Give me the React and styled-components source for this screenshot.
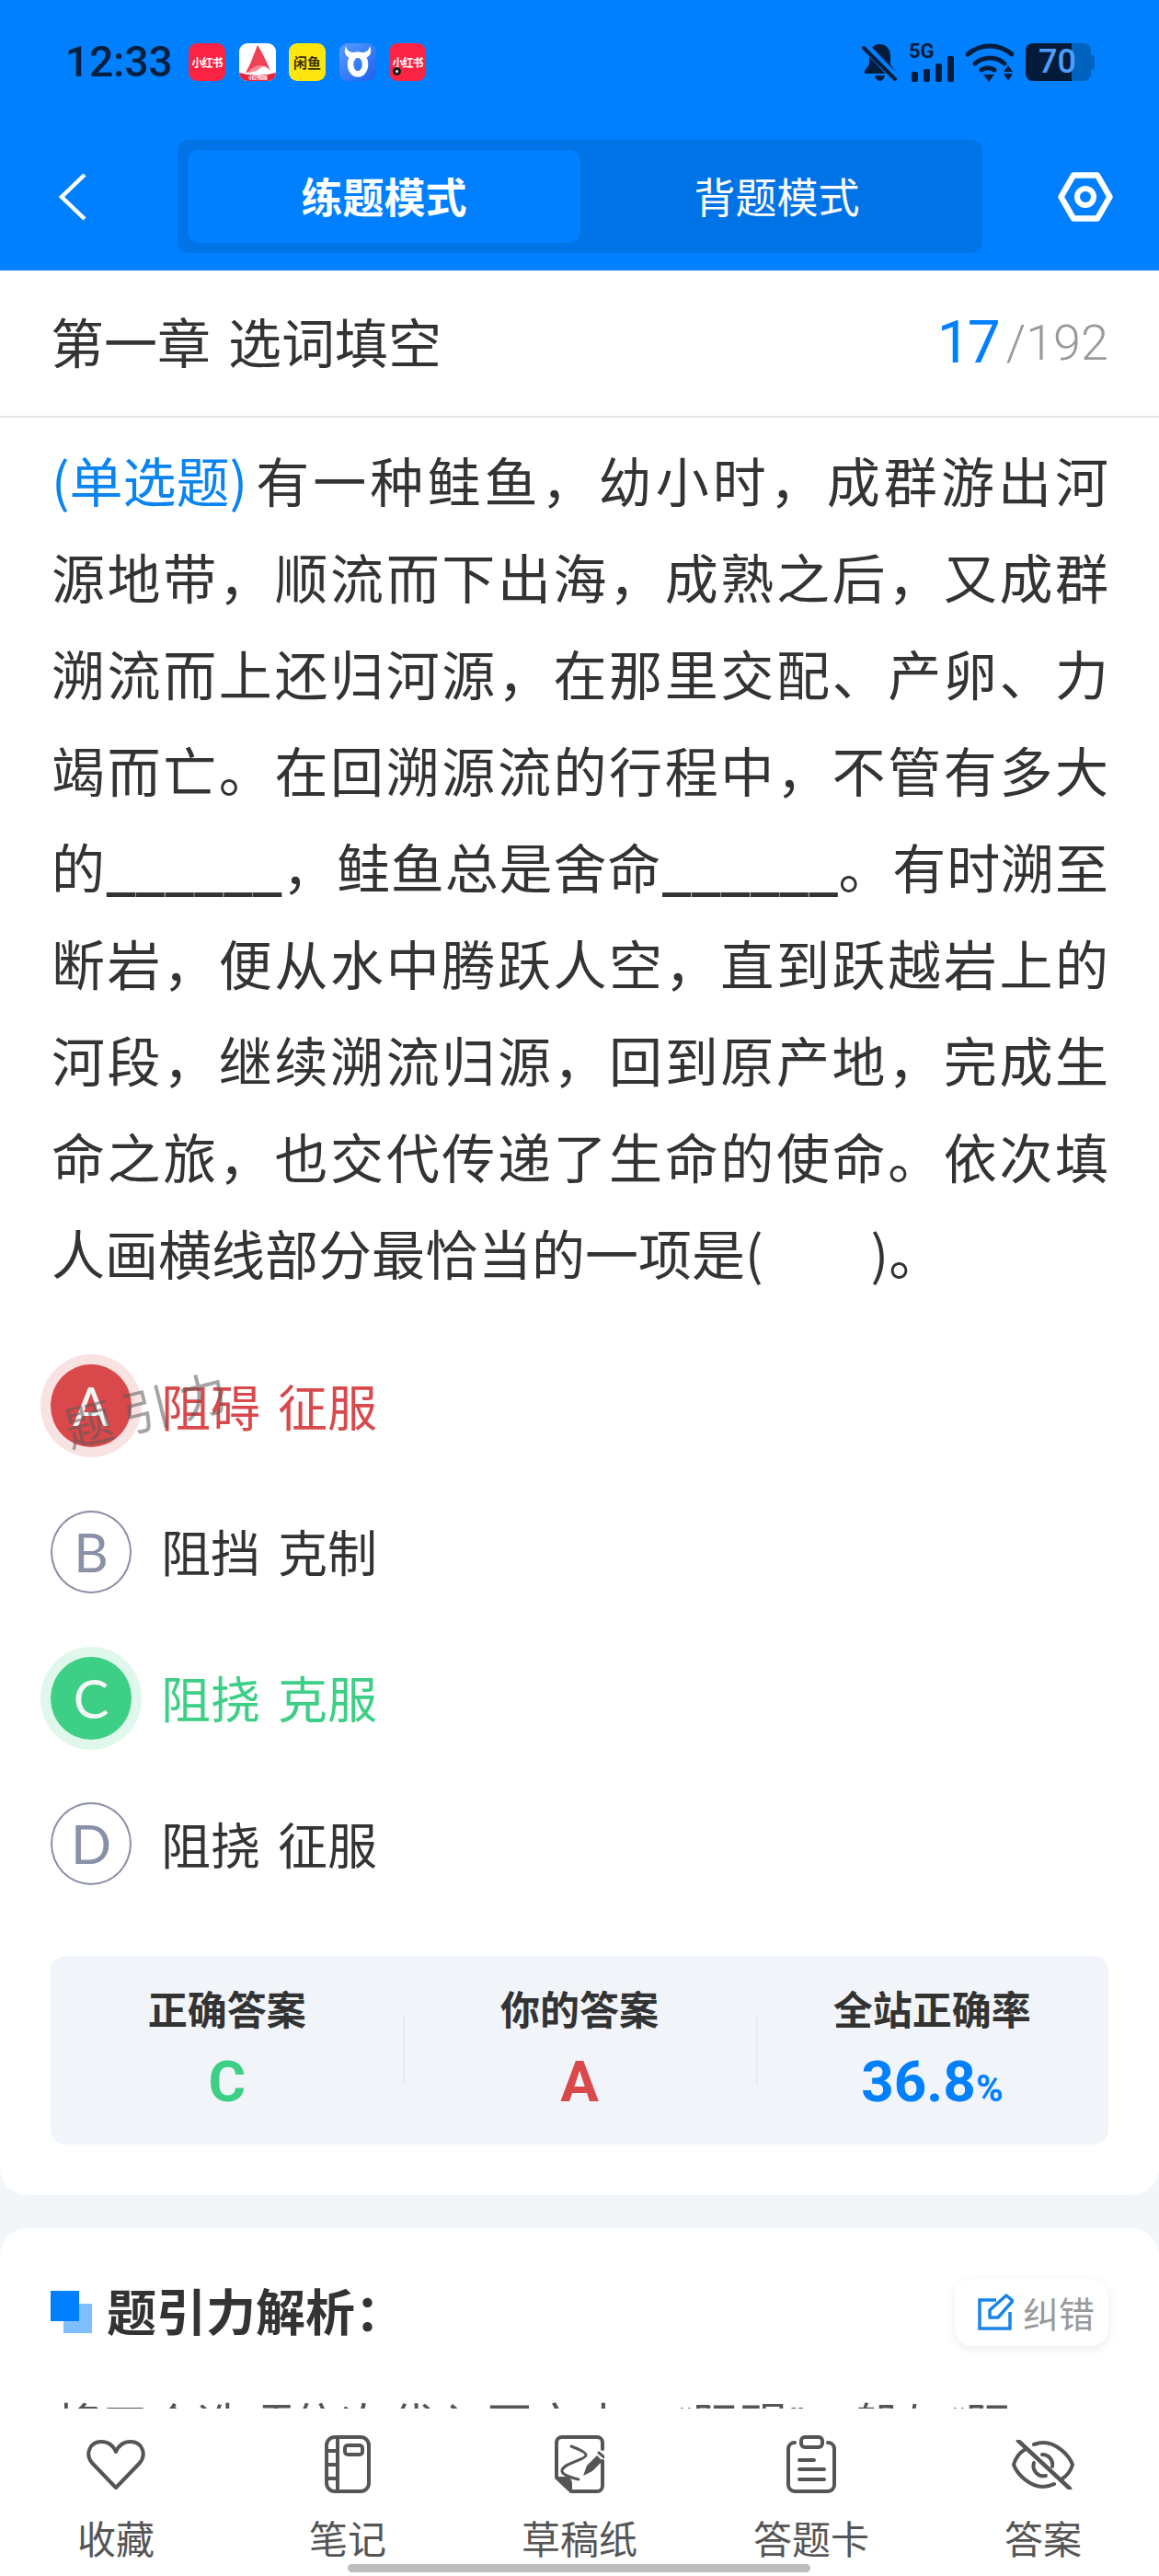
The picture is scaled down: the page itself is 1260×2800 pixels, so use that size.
import styled, { createGlobalStyle } from 'styled-components';

const CJK = '"Noto Sans CJK SC", "Noto Sans", sans-serif';
const LATIN = 'Roboto, "Noto Sans CJK SC", sans-serif';

const GlobalStyle = createGlobalStyle`
  html, body { margin: 0; padding: 0; background: #f2f6f9; }
  * { box-sizing: border-box; }
  body { font-family: ${CJK}; color: #333; }
`;

const Page = styled.div`
  position: relative;
  width: 1260px;
  height: 2800px;
  overflow: hidden;
  background: #f2f6f9;
`;

/* top blue area */
const Header = styled.header`
  height: 294px;
  padding-top: 47px;
  background: #0080ff;
`;
const StatusBar = styled.div`
  display: flex;
  align-items: center;
  height: 41px;
  padding: 0 70px 0 71px;
`;
const Clock = styled.span`
  width: 134px;
  font: 500 46px/41px ${LATIN};
  color: #061f3f;
`;
const AppIcons = styled.div`
  display: flex;
  gap: 14.5px;
`;
const AppIcon = styled.div`
  position: relative;
  display: flex;
  align-items: center;
  justify-content: center;
  width: 40px;
  height: 41px;
  border-radius: 9px;
  overflow: hidden;
  background: ${(p) => p.$bg};
  color: ${(p) => p.$fg || '#fff'};
  font: 700 ${(p) => p.$size || 12}px/1 ${CJK};
  letter-spacing: ${(p) => (p.$size ? 0 : '-1px')};
  white-space: nowrap;
`;
const RecordDot = styled.span`
  position: absolute;
  left: 4px;
  bottom: 6px;
  width: 9px;
  height: 9px;
  border-radius: 50%;
  border: 3px solid #1a1a1a;
  background: #fff;
`;
const StatusRight = styled.div`
  display: flex;
  align-items: center;
  gap: 12px;
  margin-left: auto;
  color: #041d3c;
`;
const Battery = styled.div`
  position: relative;
  display: flex;
  width: 71px;
  height: 41px;
  margin-left: 1px;
  border-radius: 8px;
  overflow: hidden;
  background: #0063bf;
`;
const BatteryFill = styled.div`
  height: 100%;
  background: #031b38;
`;
const BatteryLabel = styled.span`
  position: absolute;
  left: 14px;
  top: 0;
  font: 500 36px/41px ${LATIN};
  color: #4d9fff;
`;
const BatteryTip = styled.div`
  width: 4px;
  height: 16px;
  margin-left: -12px;
  border-radius: 0 3px 3px 0;
  background: #0063bf;
`;

const NavRow = styled.div`
  display: flex;
  align-items: center;
  height: 123px;
  margin-top: 64px;
`;
const BackButton = styled.div`
  display: flex;
  width: 193px;
  padding-left: 64px;
`;
const ModeTabs = styled.div`
  display: flex;
  width: 875px;
  height: 123px;
  padding: 11px 10px 11px 11px;
  border-radius: 12px;
  background: #0073e6;
`;
const ModeTab = styled.div`
  flex: 1;
  display: flex;
  align-items: center;
  justify-content: center;
  padding-bottom: 2px;
  border-radius: 12px;
  color: #fff;
  font-size: 45px;
  font-weight: ${(p) => (p.$active ? 700 : 400)};
  background: ${(p) => (p.$active ? '#0080ff' : 'transparent')};
`;
const SettingsButton = styled.div`
  display: flex;
  padding-left: 82px;
`;

/* question card */
const Card = styled.section`
  background: #fff;
  border-radius: 0 0 30px 30px;
  padding-bottom: 55px;
`;
const ChapterBar = styled.div`
  display: flex;
  align-items: center;
  justify-content: space-between;
  height: 160px;
  padding: 0 55px 6px 55px;
  border-bottom: 2px solid #e4e4e4;
`;
const ChapterTitle = styled.h1`
  margin: 0;
  font-size: 58px;
  font-weight: 400;
  word-spacing: 6px;
  color: #333;
`;
const Progress = styled.div`
  display: flex;
  align-items: center;
  margin-top: 5px;
  font-family: ${LATIN};
  font-weight: 300;
  line-height: 1;
  color: #999;
  font-size: 54px;
`;
const ProgressCurrent = styled.span`
  font-size: 64px;
  font-weight: 400;
  letter-spacing: -3px;
  color: #0080ff;
  margin-right: 9px;
`;
const Question = styled.div`
  padding: 15px 55px 0 56px;
`;
const QuestionLine = styled.p`
  margin: 0;
  height: 105px;
  font-size: 58px;
  line-height: 105px;
  color: #333;
  text-align: ${(p) => (p.$last ? 'left' : 'justify')};
  text-align-last: ${(p) => (p.$last ? 'left' : 'justify')};
`;
const QuestionType = styled.span`
  display: inline-block;
  margin-right: 5px;
  color: #0a84f0;
`;
const Blank = styled.span`
  display: inline-block;
  letter-spacing: -1px;
  font-weight: 700;
  text-align-last: left;
`;

const Options = styled.div`
  position: relative;
  margin-top: 35px;
  padding-left: 55px;
`;
const OptionRow = styled.div`
  display: flex;
  align-items: center;
  height: 158.67px;
`;
const toneColor = { wrong: '#d9484b', right: '#3ccf85' };
const toneHalo = { wrong: '#f9e2e2', right: '#e0f7eb' };
const OptionBadge = styled.div`
  display: flex;
  align-items: center;
  justify-content: center;
  width: 88px;
  height: 90px;
  border-radius: 50%;
  font: 400 58px/1 Lato, sans-serif;
  color: ${(p) => (p.$tone ? '#f4f7f6' : '#8a90a8')};
  background: ${(p) => (p.$tone ? toneColor[p.$tone] : '#fff')};
  border: ${(p) => (p.$tone ? 'none' : '2.5px solid #8a8fa6')};
  box-shadow: ${(p) => (p.$tone ? `0 0 0 11px ${toneHalo[p.$tone]}` : 'none')};
`;
const OptionText = styled.span`
  margin-left: 32px;
  padding-bottom: 2px;
  font-size: 54px;
  word-spacing: 7px;
  color: ${(p) => (p.$tone ? toneColor[p.$tone] : '#333')};
`;
const Watermark = styled.div`
  position: absolute;
  left: 68px;
  top: 50px;
  font-size: 52px;
  letter-spacing: 12px;
  line-height: 60px;
  color: rgba(90, 90, 90, 0.55);
  transform: rotate(-14deg);
  white-space: nowrap;
`;

const StatsPanel = styled.div`
  display: grid;
  grid-template-columns: repeat(3, 1fr);
  height: 205px;
  margin: 42px 55px 0;
  border-radius: 16px;
  background: #f1f5f9;
`;
const StatCell = styled.div`
  position: relative;
  display: flex;
  flex-direction: column;
  align-items: center;
  padding-top: 30px;
  & + &::before {
    content: '';
    position: absolute;
    left: 0;
    top: 65px;
    height: 73px;
    width: 2px;
    background: #e7ebef;
  }
`;
const StatLabel = styled.div`
  font-size: 43px;
  line-height: 52px;
  font-weight: 700;
  color: #333;
`;
const StatValue = styled.div`
  margin-top: 22px;
  font: 700 62px/66px ${LATIN};
  color: ${(p) => p.$color};
`;
const StatUnit = styled.span`
  font-size: 40px;
`;

/* analysis card */
const AnalysisCard = styled.section`
  margin-top: 36px;
  height: 700px;
  padding: 55px 55px 0;
  border-radius: 30px 30px 0 0;
  background: #fff;
`;
const AnalysisHead = styled.div`
  display: flex;
  align-items: center;
  height: 73px;
`;
const HeadMark = styled.svg`
  flex: none;
  width: 45px;
  height: 46px;
  margin-right: 16px;
`;
const AnalysisTitle = styled.h2`
  margin: 0;
  padding-bottom: 5px;
  font-size: 54px;
  font-weight: 700;
  color: #333;
`;
const ReportButton = styled.div`
  display: flex;
  align-items: center;
  gap: 10px;
  margin-left: auto;
  height: 73px;
  padding: 0 15px 0 25px;
  border-radius: 18px;
  background: #fff;
  box-shadow: 0 3px 12px rgba(0, 0, 0, 0.08);
  font-size: 39px;
  color: #999;
`;
const AnalysisText = styled.p`
  margin: 36px 0 0 3px;
  font-family: ${LATIN};
  font-size: 52px;
  line-height: 105px;
  color: #555;
  white-space: nowrap;
`;

/* bottom bar */
const TabBar = styled.nav`
  position: absolute;
  left: 0;
  right: 0;
  bottom: 0;
  display: grid;
  grid-template-columns: repeat(5, 1fr);
  height: 182px;
  padding-top: 29px;
  background: #fff;
`;
const TabItem = styled.div`
  display: flex;
  flex-direction: column;
  align-items: center;
`;
const TabIcon = styled.div`
  display: flex;
  align-items: center;
  justify-content: center;
  height: 63px;
  color: #555;
`;
const TabLabel = styled.span`
  margin-top: 27px;
  font-size: 42px;
  line-height: 42px;
  color: #555;
`;
const HomeIndicator = styled.div`
  position: absolute;
  left: 378px;
  bottom: 4px;
  width: 503px;
  height: 9px;
  border-radius: 5px;
  background: #bdbdbd;
`;

const line = { fill: 'none', stroke: 'currentColor', strokeLinecap: 'round', strokeLinejoin: 'round' };

const options = [
  { key: 'A', text: '阻碍 征服', tone: 'wrong' },
  { key: 'B', text: '阻挡 克制' },
  { key: 'C', text: '阻挠 克服', tone: 'right' },
  { key: 'D', text: '阻挠 征服' },
];

const tabs = [
  {
    label: '收藏',
    icon: (
      <svg width="64" height="56" viewBox="0 0 64 56">
        <path {...line} strokeWidth="4" d="M32 53 L6 26 C-2 16 4 3 16 3 C23 3 29 7 32 14 C35 7 41 3 48 3 C60 3 66 16 58 26 Z" />
      </svg>
    ),
  },
  {
    label: '笔记',
    icon: (
      <svg width="50" height="63" viewBox="0 0 50 63">
        <rect {...line} strokeWidth="4" x="2" y="2" width="46" height="59" rx="9" />
        <path {...line} strokeWidth="4" d="M14 2 V61 M2 17 H14 M2 32 H14 M2 47 H14" />
        <rect {...line} strokeWidth="4" x="22" y="11" width="19" height="10" rx="3" />
      </svg>
    ),
  },
  {
    label: '草稿纸',
    icon: (
      <svg width="54" height="63" viewBox="0 0 54 63">
        <path {...line} strokeWidth="4" d="M52 15 V8 a6 6 0 0 0 -6 -6 H8 a6 6 0 0 0 -6 6 V46 L18 61 H46 a6 6 0 0 0 6 -6 V28" />
        <path fill="currentColor" d="M2 45 H12 a7 7 0 0 1 7 7 V61 H17 Z" />
        <path {...line} strokeWidth="3" d="M18 12 C26 15 35 19 34 22 C33 27 10 30 8 38 C7 43 18 46 26 48" />
        <path fill="currentColor" d="M31 44 L35 33 L46 22 L52 28 L41 39 Z" />
        <path {...line} strokeWidth="3" d="M48 19 L54 24" />
      </svg>
    ),
  },
  {
    label: '答题卡',
    icon: (
      <svg width="54" height="63" viewBox="0 0 54 63">
        <path {...line} strokeWidth="4" d="M9 8 a7 7 0 0 0 -7 6 V54 a7 7 0 0 0 7 7 H45 a7 7 0 0 0 7 -7 V14 a7 7 0 0 0 -7 -6" />
        <rect {...line} strokeWidth="4" x="16" y="2" width="23" height="11" rx="4" />
        <path {...line} strokeWidth="4" d="M14 27 H30 M14 37 H41 M14 48 H41" />
      </svg>
    ),
  },
  {
    label: '答案',
    icon: (
      <svg width="68" height="54" viewBox="0 0 68 54">
        <path {...line} strokeWidth="4" d="M15 10 C8 14 4 20 2 27 C6 38 20 51 34 51 C38 51 42 50 46 48" />
        <path {...line} strokeWidth="4" d="M24 5 C27 4 31 3 34 3 C48 3 62 16 66 27 C64 34 60 39 54 43" />
        <path {...line} strokeWidth="4.5" d="M7 1 L63 53" />
        <path {...line} strokeWidth="4" d="M24 25 a11 11 0 0 0 13 14" />
        <path {...line} strokeWidth="4" d="M33 16 a11 11 0 0 1 11 13" />
      </svg>
    ),
  },
];

export default function App() {
  return (
    <Page lang="zh-CN">
      <GlobalStyle />
      <Header>
        <StatusBar>
          <Clock>12:33</Clock>
          <AppIcons>
            <AppIcon $bg="#fb2343">小红书</AppIcon>
            <AppIcon $bg="#fff">
              <svg width="40" height="41" viewBox="0 0 40 41">
                <path fill="#ef4257" d="M20 2 C24 8 30 20 34 30 C30 25 26 24 23 26 C18 29 12 31 7 32 C12 24 16 12 20 2 Z" />
                <path fill="#f98a96" d="M9 32 C14 26 22 22 26 25 C20 30 14 32 9 32 Z" />
                <path fill="#e8213c" d="M0 32 Q20 38 40 32 V41 H0 Z" />
                <text x="20" y="39" fontSize="5" fill="#fff" textAnchor="middle" fontFamily={CJK}>小红书家居</text>
              </svg>
            </AppIcon>
            <AppIcon $bg="#ffe60f" $fg="#3a3100" $size={15}>闲鱼</AppIcon>
            <AppIcon $bg="linear-gradient(135deg, #5a9cff, #1a60ee)">
              <svg width="40" height="41" viewBox="0 0 40 41">
                <ellipse cx="20" cy="23" rx="8" ry="10.5" fill="none" stroke="#fff" strokeWidth="6.5" />
                <path fill="#fff" d="M7 3 C8 8 11 10 15 10 L25 10 C29 10 32 8 33 3 C36 10 33 15 28 16 L12 16 C7 15 4 10 7 3 Z" />
              </svg>
            </AppIcon>
            <AppIcon $bg="#fb2343">
              小红书
              <RecordDot />
            </AppIcon>
          </AppIcons>
          <StatusRight>
            <svg width="39" height="41" viewBox="0 0 39 41">
              <path fill="currentColor" d="M19.5 1 C12 1 8 7 8 14 V23 L3 30 V33 H36 V30 L31 23 V14 C31 7 27 1 19.5 1 Z" />
              <path fill="currentColor" d="M14 35 H25 C24 39 22 41 19.5 41 C17 41 15 39 14 35 Z" />
              <path stroke="#0080ff" strokeWidth="9" d="M4 4 L37 38" />
              <path stroke="currentColor" strokeWidth="4" strokeLinecap="round" d="M2 5 L36 39" />
            </svg>
            <svg width="50" height="42" viewBox="0 0 50 42">
              <text x="0" y="16" fontSize="22" fontWeight="700" fill="currentColor" fontFamily={LATIN}>5G</text>
              <rect x="3" y="31" width="7" height="11" rx="2" fill="currentColor" />
              <rect x="16" y="28" width="7" height="14" rx="2" fill="currentColor" />
              <rect x="29" y="22" width="7" height="20" rx="2" fill="currentColor" />
              <rect x="42" y="14" width="7" height="28" rx="2" fill="currentColor" />
            </svg>
            <svg width="52" height="42" viewBox="0 0 52 42">
              <path fill="none" stroke="currentColor" strokeWidth="5" strokeLinecap="round" d="M2 12 C16 0 36 0 50 12" />
              <path fill="none" stroke="currentColor" strokeWidth="5" strokeLinecap="round" d="M10 22 C19 14 33 14 42 22" />
              <path fill="none" stroke="currentColor" strokeWidth="5" strokeLinecap="round" d="M17 29 C21 26 27 26 31 29" />
              <path fill="currentColor" d="M19 34 H31 L25 42 Z" />
              <path fill="currentColor" d="M46 24 L51 31 H41 Z M41 33 H51 L46 41 Z" />
            </svg>
            <Battery>
              <BatteryFill style={{ width: '70%' }} />
              <BatteryLabel>70</BatteryLabel>
            </Battery>
            <BatteryTip />
          </StatusRight>
        </StatusBar>
        <NavRow>
          <BackButton>
            <svg width="30" height="52" viewBox="0 0 30 52">
              <path fill="none" stroke="#fff" strokeWidth="4.5" d="M28 2 L3 26 L28 50" />
            </svg>
          </BackButton>
          <ModeTabs>
            <ModeTab $active>练题模式</ModeTab>
            <ModeTab>背题模式</ModeTab>
          </ModeTabs>
          <SettingsButton>
            <svg width="60" height="54" viewBox="0 0 60 54">
              <path fill="none" stroke="#fff" strokeWidth="6.5" strokeLinejoin="round" d="M17 3.5 H43 L56.5 27 L43 50.5 H17 L3.5 27 Z" />
              <circle cx="30" cy="27" r="9" fill="none" stroke="#fff" strokeWidth="6" />
            </svg>
          </SettingsButton>
        </NavRow>
      </Header>

      <Card>
        <ChapterBar>
          <ChapterTitle>第一章 选词填空</ChapterTitle>
          <Progress>
            <ProgressCurrent>17</ProgressCurrent>/192
          </Progress>
        </ChapterBar>
        <Question>
          <QuestionLine><QuestionType>(单选题)</QuestionType>有一种鲑鱼，幼小时，成群游出河</QuestionLine>
          <QuestionLine>源地带，顺流而下出海，成熟之后，又成群</QuestionLine>
          <QuestionLine>溯流而上还归河源，在那里交配、产卵、力</QuestionLine>
          <QuestionLine>竭而亡。在回溯源流的行程中，不管有多大</QuestionLine>
          <QuestionLine>的<Blank>______</Blank>，鲑鱼总是舍命<Blank>______</Blank>。有时溯至</QuestionLine>
          <QuestionLine>断岩，便从水中腾跃人空，直到跃越岩上的</QuestionLine>
          <QuestionLine>河段，继续溯流归源，回到原产地，完成生</QuestionLine>
          <QuestionLine>命之旅，也交代传递了生命的使命。依次填</QuestionLine>
          <QuestionLine $last>人画横线部分最恰当的一项是(&nbsp;&nbsp;&nbsp;&nbsp;&nbsp;&nbsp;&nbsp;&nbsp;&nbsp;)。</QuestionLine>
        </Question>
        <Options>
          {options.map((o) => (
            <OptionRow key={o.key}>
              <OptionBadge $tone={o.tone}>{o.key}</OptionBadge>
              <OptionText $tone={o.tone}>{o.text}</OptionText>
            </OptionRow>
          ))}
          <Watermark>题引力</Watermark>
        </Options>
        <StatsPanel>
          <StatCell>
            <StatLabel>正确答案</StatLabel>
            <StatValue $color="#3ccf85">C</StatValue>
          </StatCell>
          <StatCell>
            <StatLabel>你的答案</StatLabel>
            <StatValue $color="#d9484b">A</StatValue>
          </StatCell>
          <StatCell>
            <StatLabel>全站正确率</StatLabel>
            <StatValue $color="#0080ff">36.8<StatUnit>%</StatUnit></StatValue>
          </StatCell>
        </StatsPanel>
      </Card>

      <AnalysisCard>
        <AnalysisHead>
          <HeadMark viewBox="0 0 45 46">
            <rect x="14" y="14" width="31" height="32" fill="#80bfff" />
            <rect x="0" y="0" width="31" height="33" fill="#0080ff" />
          </HeadMark>
          <AnalysisTitle>题引力解析：</AnalysisTitle>
          <ReportButton>
            <svg width="39" height="40" viewBox="0 0 39 40">
              <path fill="none" stroke="#1a84e8" strokeWidth="3.5" d="M20 7 H2 V38 H35 V20" />
              <path fill="none" stroke="#1a84e8" strokeWidth="3.5" strokeLinejoin="round" d="M31 2 L38 8 L22 26 H13 V18 Z" />
            </svg>
            纠错
          </ReportButton>
        </AnalysisHead>
        <AnalysisText>将三个选项依次代入原文中，“阻碍”一般与“阻</AnalysisText>
      </AnalysisCard>

      <TabBar>
        {tabs.map((t) => (
          <TabItem key={t.label}>
            <TabIcon>{t.icon}</TabIcon>
            <TabLabel>{t.label}</TabLabel>
          </TabItem>
        ))}
        <HomeIndicator />
      </TabBar>
    </Page>
  );
}
